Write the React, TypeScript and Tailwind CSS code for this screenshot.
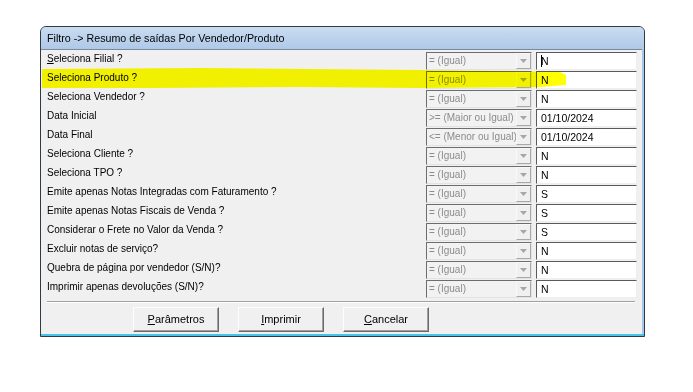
import React from "react";

type Row = { label: React.ReactNode; op: string; val: string; caret?: boolean };

const rows: Row[] = [
  { label: <><span className="underline">S</span>eleciona Filial ?</>, op: "= (Igual)", val: "N", caret: true },
  { label: "Seleciona Produto ?", op: "= (Igual)", val: "N" },
  { label: "Seleciona Vendedor ?", op: "= (Igual)", val: "N" },
  { label: "Data Inicial", op: ">= (Maior ou Igual)", val: "01/10/2024" },
  { label: "Data Final", op: "<= (Menor ou Igual)", val: "01/10/2024" },
  { label: "Seleciona Cliente ?", op: "= (Igual)", val: "N" },
  { label: "Seleciona TPO ?", op: "= (Igual)", val: "N" },
  { label: "Emite apenas Notas Integradas com Faturamento ?", op: "= (Igual)", val: "S" },
  { label: "Emite apenas Notas Fiscais de Venda ?", op: "= (Igual)", val: "S" },
  { label: "Considerar o Frete no Valor da Venda ?", op: "= (Igual)", val: "S" },
  { label: "Excluir notas de serviço?", op: "= (Igual)", val: "N" },
  { label: "Quebra de página por vendedor (S/N)?", op: "= (Igual)", val: "N" },
  { label: "Imprimir apenas devoluções (S/N)?", op: "= (Igual)", val: "N" },
];

function Combo({ text }: { text: string }) {
  return (
    <div className="flex h-[18px] w-[106px] border-t border-l border-t-[#6d6d6d] border-l-[#6d6d6d] border-b border-r border-b-[#e3e3e3] border-r-[#e3e3e3] bg-[#f2f2f2]">
      <div className="flex-1 overflow-hidden whitespace-nowrap pl-[2px] text-[10px] leading-[16px] text-[#8c8c8c]">{text}</div>
      <div className="flex h-[16px] w-[15px] items-center justify-center border border-t-[#f8f8f8] border-l-[#f8f8f8] border-b-[#a8a8a8] border-r-[#a8a8a8] bg-[#f0f0f0]">
        <svg width="7" height="4" viewBox="0 0 7 4"><path d="M0 0 H7 L3.5 4 Z" fill="#a6a6a6" /></svg>
      </div>
    </div>
  );
}

function Field({ text, caret }: { text: string; caret?: boolean }) {
  return (
    <div className="flex h-[18px] w-[101px] items-center border-t border-l border-t-[#5a5a5a] border-l-[#5a5a5a] border-b border-r border-b-[#eeeeee] border-r-[#eeeeee] bg-white pl-[4px] text-[10.5px] leading-[16px] text-black">
      {caret && <span className="mr-[-1px] inline-block h-[12px] w-[1px] bg-black" />}
      <span>{text}</span>
    </div>
  );
}

function Btn({ u, rest }: { u: string; rest: string }) {
  return (
    <div className="flex h-[25px] w-[86px] items-center justify-center border border-t-[#fdfdfd] border-l-[#fdfdfd] border-b-[#6a6a6a] border-r-[#6a6a6a] bg-[#f0f0f0] text-[11px] text-black shadow-[inset_-1px_-1px_0_#a0a0a0]">
      <span><span className="underline">{u}</span>{rest}</span>
    </div>
  );
}

export default function App() {
  return (
    <div className="relative h-[392px] w-[693px] bg-white pl-[40px] pt-[26px]" style={{ fontFamily: '"Liberation Sans", Arial, sans-serif' }}>
      <div className="flex h-[311px] w-[605px] flex-col overflow-hidden rounded-t-[6px] border border-[#2f3a45] bg-[#a9c6e6]">
        <div className="flex h-[22px] shrink-0 items-center bg-gradient-to-b from-[#cadcf0] to-[#aec9e8] pl-[6px] text-[10.7px] text-black">
          Filtro -&gt; Resumo de saídas Por Vendedor/Produto
        </div>
        <div className="flex flex-1 flex-col border-b-[2px] border-b-[#46c4ec] pr-[2px]">
          <div className="flex flex-1 flex-col border-t border-t-[#7a8a9a] bg-[#f0f0f0] pl-[6px] pr-[5px] pt-[2px]">
            <div className="flex flex-col gap-[1px]">
              {rows.map((r, i) => (
                <div key={i} className="flex h-[18px] items-start">
                  <div className="flex-1 whitespace-nowrap text-[10px] leading-[14px] text-black">{r.label}</div>
                  <Combo text={r.op} />
                  <div className="w-[4px]" />
                  <Field text={r.val} caret={r.caret} />
                </div>
              ))}
            </div>
            <div className="mt-[3px] mr-[2px] h-[2px] border-t border-t-[#a0a0a0] border-b border-b-white" />
            <div className="flex gap-[19px] pl-[86px] pt-[4px]">
              <Btn u="P" rest="arâmetros" />
              <Btn u="I" rest="mprimir" />
              <Btn u="C" rest="ancelar" />
            </div>
          </div>
        </div>
      </div>
      <svg className="pointer-events-none absolute left-0 top-0 mix-blend-multiply" width="693" height="392">
        <path d="M42 69 L200 68 L420 70 L560 72 L566 75 L566 85 L540 87 L420 88 L300 87 L150 88 L42 88 Z" fill="#ffff00" />
      </svg>
    </div>
  );
}
